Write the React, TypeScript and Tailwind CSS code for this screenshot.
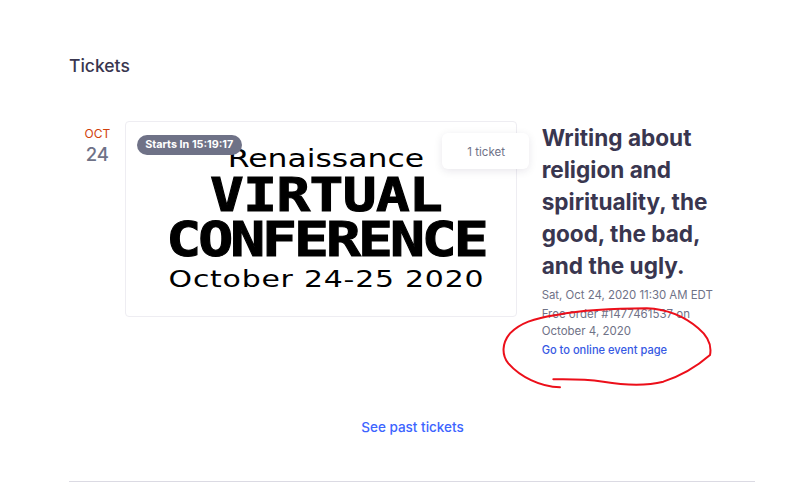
import React from "react";

const sans = "font-['Inter','Liberation_Sans',sans-serif]";

// the conference banner, a picture in the original
const Banner: React.FC = () => (
  <div className="flex h-full flex-col items-center pl-[11px] pt-[24px] text-black">
    <p className="whitespace-nowrap font-['DejaVu_Sans',sans-serif] text-[24px] leading-[26px] scale-x-[1.31]">Renaissance</p>
    <p className="mt-[2px] whitespace-nowrap font-['DejaVu_Sans_Mono',monospace] text-[46px] font-bold leading-[42px] scale-x-[1.22] tracking-[-0.5px] [-webkit-text-stroke:1px_black]">VIRTUAL</p>
    <p className="mt-[2px] whitespace-nowrap font-['DejaVu_Sans_Mono',monospace] text-[48px] font-bold leading-[42px] scale-x-[1.21] tracking-[-2.5px] [-webkit-text-stroke:1px_black]">CONFERENCE</p>
    <p className="mt-[6px] whitespace-nowrap font-['DejaVu_Sans',sans-serif] text-[23px] leading-[26px] scale-x-[1.3] tracking-[0.6px]">October 24-25 2020</p>
  </div>
);

const App: React.FC = () => {
  return (
    <div className={`relative h-[494px] w-[796px] overflow-hidden bg-white ${sans}`}>
      <div className="px-[69px] pt-[55px]">
        <h2 className="text-[17.5px] font-medium leading-[22px] text-[#39364f]">Tickets</h2>

        <div className="mt-[44px] flex">
          {/* date */}
          <div className="flex w-[57px] flex-col items-center pl-[1px] pt-[6px]">
            <span className="text-[12px] leading-[14px] text-[#d1410c]">OCT</span>
            <span className="mt-[1px] text-[18.5px] font-medium leading-[24px] text-[#6f7287]">24</span>
          </div>

          {/* event image */}
          <div className="relative h-[196px] w-[392px] shrink-0 rounded border border-[#eeedf2] bg-white">
            <Banner />
            <span className="absolute left-[11px] top-[13px] rounded-[10px] bg-[#6f7287] px-[8.5px] text-[10.8px] font-bold leading-[20px] text-white">
              Starts In 15:19:17
            </span>
            <div className="absolute left-[316px] top-[11px] flex h-[36px] w-[87px] items-center justify-center rounded-md bg-white pl-[2px] pt-[3px] text-[11.5px] text-[#6f7287] shadow-[0_2px_8px_rgba(30,10,60,0.1)]">
              1 ticket
            </div>
          </div>

          {/* details */}
          <div className="ml-[25px] w-[190px]">
            <h3 className="mt-[1px] text-[22.6px] font-bold leading-[32px] text-[#39364f]">
              Writing about religion and spirituality, the good, the bad, and the ugly.
            </h3>
            <p className="mt-[4px] whitespace-nowrap text-[11.4px] leading-[18px] text-[#6f7287]">Sat, Oct 24, 2020 11:30 AM EDT</p>
            <p className="mt-[2px] w-[170px] text-[11.5px] leading-[17px] text-[#6f7287]">Free order #1477461537 on October 4, 2020</p>
            <a className="mt-[1px] block whitespace-nowrap text-[11.1px] font-medium leading-[18px] text-[#3659e3]">Go to online event page</a>
          </div>
        </div>

        <div className="mt-[55px] pl-[29px] text-center">
          <a className="text-[13.5px] font-medium leading-[20px] text-[#3d64ff]">See past tickets</a>
        </div>
        <div className="mt-[43px] h-px w-[686px] bg-[#dbdae3]" />
      </div>

      {/* hand drawn red circle over the link */}
      <svg className="absolute left-[490px] top-[280px]" width="240" height="115" viewBox="0 0 720 345" fill="none">
        <path
          d="M210 322C150 320 90 290 55 250C35 225 35 190 60 160C90 130 130 115 200 105C280 90 400 85 470 85C540 88 590 115 625 145C655 170 665 200 660 225C620 260 580 285 520 305C460 320 400 315 340 305C290 298 240 297 190 298"
          stroke="#ec0f1a"
          strokeWidth="6"
          strokeLinecap="round"
        />
      </svg>
    </div>
  );
};

export default App;
